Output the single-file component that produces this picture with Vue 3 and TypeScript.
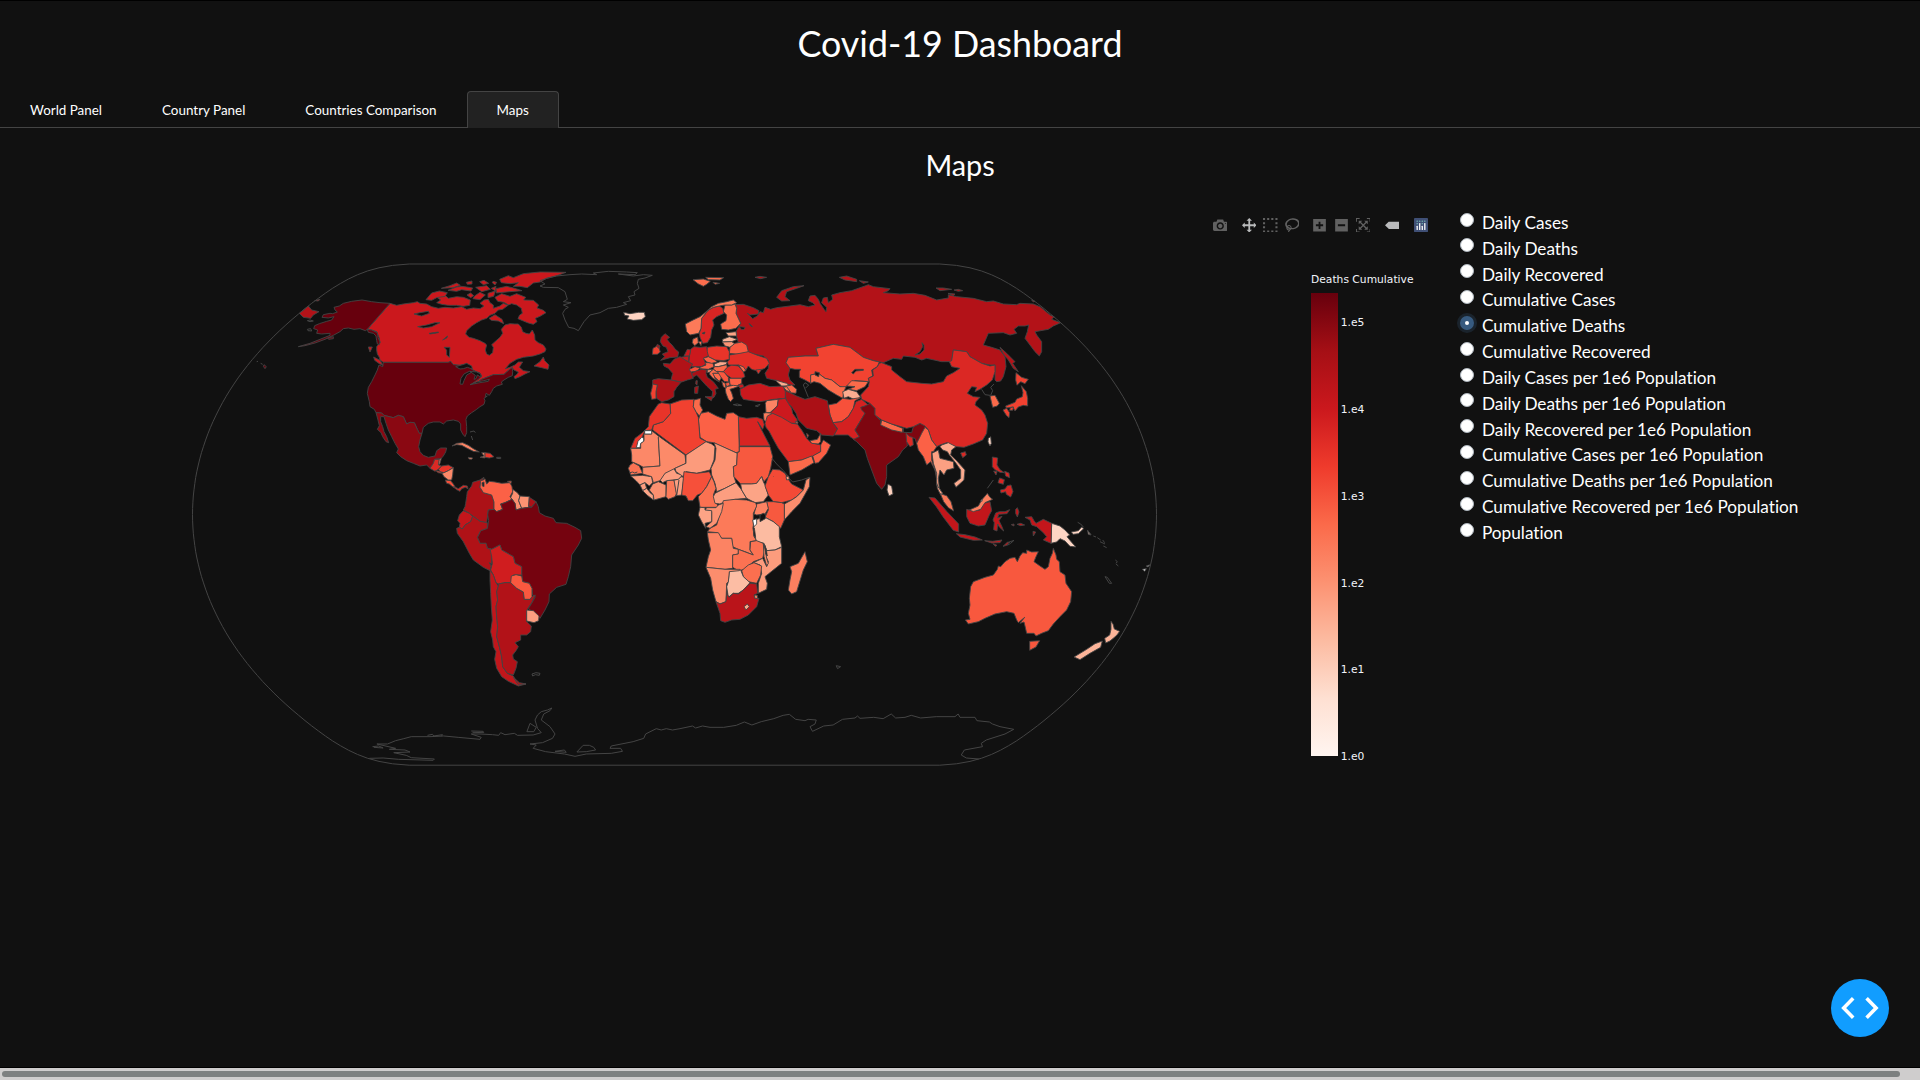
<script setup lang="ts">
import { ref } from 'vue'

type Shape = [fill: string, points: string]
interface Region { name: string; transform: string; shapes: Shape[]; lines?: string[] }

const tabs = ['World Panel', 'Country Panel', 'Countries Comparison', 'Maps']
const activeTab = ref('Maps')

const metrics = [
  'Daily Cases', 'Daily Deaths', 'Daily Recovered', 'Cumulative Cases', 'Cumulative Deaths',
  'Cumulative Recovered', 'Daily Cases per 1e6 Population', 'Daily Deaths per 1e6 Population',
  'Daily Recovered per 1e6 Population', 'Cumulative Cases per 1e6 Population',
  'Cumulative Deaths per 1e6 Population', 'Cumulative Recovered per 1e6 Population', 'Population'
]
const metric = ref('Cumulative Deaths')

const ticks = [
  { label: '1.e5', y: 321.9 }, { label: '1.e4', y: 409 }, { label: '1.e3', y: 496 },
  { label: '1.e2', y: 583 }, { label: '1.e1', y: 669 }, { label: '1.e0', y: 756 }
]

// Natural Earth projection, used for the outline of the globe
const K = 176.2
function project(lambda: number, phi: number): string {
  const p2 = phi * phi
  const p4 = p2 * p2
  const x = lambda * (0.8707 - 0.131979 * p2 + p4 * (-0.013791 + p4 * (0.003971 * p2 - 0.001529 * p4)))
  const y = phi * (1.007226 + p2 * (0.015085 + p4 * (-0.044475 + 0.028874 * p2 - 0.005916 * p4)))
  return `${(674.5 + K * x).toFixed(1)},${(514.6 - K * y).toFixed(1)}`
}
const globe = (() => {
  const pts: string[] = []
  for (let a = -90; a <= 90; a += 2) pts.push(project(Math.PI, (a * Math.PI) / 180))
  for (let a = 90; a >= -90; a -= 2) pts.push(project(-Math.PI, (a * Math.PI) / 180))
  return pts.join(' ')
})()

const BG = '#111111'
const CA = '#cb181d'
const US = '#67000d'
const RU = '#b31218'
const ID = '#c3161b'

const regions: Region[] = [
  {
    name: 'north-america',
    transform: 'translate(280 250) scale(.333333)',
    shapes: [
      [CA, '330,160 350,166 370,162 400,158 412,155 420,160 440,162 455,170 475,175 495,172 520,174 545,170 560,178 580,174 600,176 612,168 600,160 612,150 625,148 630,158 640,165 640,175 660,168 670,160 684,166 668,178 655,180 645,190 630,196 620,205 605,210 590,218 575,228 560,242 557,252 567,262 580,265 600,272 615,280 620,285 616,300 620,312 628,316 638,308 640,292 635,284 645,275 660,262 668,250 664,238 675,225 690,221 705,222 715,222 724,232 728,245 738,250 748,252 757,240 764,255 765,270 775,278 790,285 798,297 795,305 780,312 760,318 730,322 710,328 690,340 676,356 690,352 705,345 715,336 728,336 722,345 718,352 730,362 750,365 735,372 720,380 705,386 702,380 712,372 715,366 702,360 697,353 690,357 680,366 672,373 640,374 620,382 605,388 590,398 575,402 580,395 595,388 605,378 598,368 590,366 575,358 572,348 560,342 540,346 520,344 512,334 505,337 310,337 300,330 298,322 292,312 290,300 290,290 300,278 298,265 290,245 275,240 262,238'],
      [US, '330,160 300,158 275,155 246,150 215,154 190,160 178,168 162,172 165,180 172,186 158,191 150,190 130,194 126,202 145,204 162,200 155,210 140,214 118,221 104,227 101,236 113,240 110,250 125,252 150,250 150,256 120,268 90,280 55,290 75,287 105,279 135,268 160,256 180,245 190,236 205,234 222,238 240,236 256,242 262,238 265,247 280,250 288,258 290,272 292,282 298,284 300,276 294,262 292,248 275,240 262,238'],
      [US, '143,264 160,260 160,266 146,268'],
      [US, '310,337 505,337 512,334 520,344 540,346 560,342 572,348 575,358 590,366 598,368 605,378 595,388 575,402 590,398 605,388 620,382 640,374 672,373 680,366 690,357 697,353 698,365 697,377 685,382 672,390 664,396 667,403 650,408 640,415 635,425 628,436 618,430 616,440 622,438 612,445 615,452 612,463 600,470 590,478 575,488 562,498 558,508 560,530 560,548 555,560 548,552 542,540 542,522 535,514 520,510 500,513 490,522 480,516 460,516 445,520 430,532 426,550 418,550 412,538 403,518 390,517 380,522 370,500 355,496 340,503 312,496 305,489 288,488 283,478 270,470 268,455 262,430 265,412 275,395 285,375 292,360 297,345 308,350'],
      [BG, '527,350 545,345 560,340 575,348 577,357 562,352 550,356 540,357'],
      [BG, '540,402 543,385 552,372 570,363 573,368 560,375 552,392 548,403'],
      [BG, '570,364 590,366 602,372 603,382 592,375 588,386 582,388 586,376'],
      [BG, '570,404 590,396 612,392 628,388 625,394 600,398'],
      ['#8a0812', '288,488 305,489 312,496 340,503 355,496 370,500 380,522 390,517 403,518 412,538 418,550 426,550 420,570 416,590 420,605 430,616 445,622 465,618 470,602 482,594 500,594 497,606 490,618 484,625 478,626 464,628 460,640 450,655 440,645 420,648 400,640 380,632 362,620 350,608 355,597 345,580 335,560 325,540 318,520 312,500 302,500 302,515 308,530 312,545 320,560 326,578 318,575 308,560 303,548 292,538 298,527 294,510 290,495'],
      ['#dc2a25', '450,655 460,640 464,628 478,628 476,645 485,648 475,658 465,664'],
      ['#fc9272', '478,628 484,625 480,640 476,645'],
      ['#f14130', '468,662 480,664 486,670 474,668'],
      ['#e83429', '476,658 485,648 505,645 520,653 505,662 492,668 480,665'],
      ['#fc8868', '520,653 518,675 515,690 505,690 492,680 486,670 492,668 505,662'],
      ['#f7503a', '496,690 512,692 520,702 526,712 520,712 508,702 500,700'],
      ['#de2a25', '526,712 535,716 550,706 562,708 564,716 556,712 545,716 540,724 528,718 520,710'],
      ['#fc8464', '516,588 530,580 548,578 565,586 580,596 598,606 580,604 560,594 545,586 530,584'],
      ['#fc8d6d', '605,608 615,608 615,624 600,622 612,618'],
      ['#ea362a', '615,608 630,610 642,620 628,624 615,622'],
      ['#fc8d6d', '565,622 578,624 575,628 567,627'],
      [CA, '468,140 490,131 505,145 530,140 550,142 571,150 569,166 550,169 530,166 505,166 485,163 470,158 482,150'],
      [CA, '438,149 455,129 478,123 502,128 495,139 470,143 455,151'],
      [CA, '484,115 510,107 530,99 541,106 520,113'],
      [CA, '559,97 576,93 576,102 562,103'],
      [CA, '504,121 530,111 545,109 560,111 578,114 573,123 545,119 530,124'],
      [CA, '599,95 612,91 626,100 610,104'],
      [CA, '639,94 650,97 645,105 637,98'],
      [CA, '659,88 685,77 700,83 730,71 780,66 858,67 830,77 800,85 780,96 760,99 742,113 720,109 700,109 715,98 690,101 664,98'],
      [CA, '648,116 680,109 700,114 726,122 690,125 649,129'],
      [CA, '587,112 620,107 631,118 605,125'],
      [CA, '561,135 572,129 581,137 572,143'],
      [CA, '584,138 600,127 616,135 600,149 579,146'],
      [CA, '624,130 646,123 641,139 624,143'],
      [CA, '634,115 648,109 646,123'],
      [CA, '645,142 665,131 690,139 710,131 737,142 731,150 760,151 776,165 771,174 790,181 798,188 780,199 766,205 771,215 760,223 745,219 730,213 714,206 719,195 727,190 724,175 710,165 695,161 685,165 672,157 653,154'],
      [CA, '627,205 645,194 666,208 671,221 655,213 634,211'],
      [CA, '762,348 780,335 790,321 794,332 807,345 804,358 785,353'],
      [CA, '281,321 300,331 309,346 298,341 284,331'],
      [CA, '265,291 277,291 270,306'],
      [BG, '402,192 420,188 445,184 448,190 425,198'],
      [BG, '413,230 440,225 465,218 480,218 455,230 430,234'],
      [BG, '447,250 475,246 475,248 450,252'],
      [BG, '488,270 503,258 500,264'],
      [BG, '492,292 510,292 508,322 500,315 500,300'],
      [RU, '58,190 85,168 95,180 117,185 100,195 92,205 70,202'],
      [RU, '104,152 120,148 115,153'],
      ['#67000d', '-48,344 -41,350 -45,356 -50,349'],
      ['#fdd3c1', '1031,187 1050,191 1075,187 1093,187 1096,200 1085,209 1060,211 1041,207 1047,198 1034,196']
    ],
    lines: [
      '780,92 800,85 830,78 870,74 905,72 950,74 940,69 985,64 1040,66 1072,68 1065,74 1015,72 1060,78 1090,74 1117,76 1095,84 1075,88 1072,100 1077,115 1062,125 1065,135 1045,140 1052,152 1030,158 1040,163 1010,172 985,175 960,188 930,195 912,215 895,242 882,235 866,232 855,210 848,190 855,178 865,172 850,165 873,158 850,155 862,148 855,125 835,113 790,112 780,108 795,102 780,92',
      '82,212 90,210 100,213 90,215 82,212', '82,238 92,236 95,243 84,242 82,238',
      '650,622 662,622 662,626 650,625 650,622', '570,546 582,543 586,548', '574,558 578,570',
      '-70,335 -66,334', '-58,340 -52,343'
    ]
  },
  {
    name: 'south-america',
    transform: 'translate(430 460) scale(.333333)',
    shapes: [
      ['#ac1117', '162,52 150,60 128,67 125,78 112,95 110,110 107,130 105,140 100,150 118,160 128,168 150,184 170,188 173,165 175,150 192,148 192,126 185,105 160,98 150,82 155,64'],
      ['#fb6146', '152,62 160,60 165,56 170,72 178,64 195,66 215,70 240,68 246,80 248,95 240,110 246,118 225,128 212,132 218,148 200,155 192,148 192,126 185,105 160,98 150,82'],
      [BG, '156,68 162,66 162,80 157,78'],
      ['#fb6146', '232,64 244,63 243,71'],
      ['#fc8f6f', '248,88 262,98 270,108 266,122 275,145 258,150 255,130 242,112 248,100'],
      ['#fc9272', '270,108 298,110 296,142 275,145 266,122'],
      ['#ac1117', '298,112 318,125 305,142 296,138'],
      ['#75030f', '318,125 325,140 328,158 345,168 370,175 378,188 410,190 435,202 452,212 455,235 445,255 425,285 422,320 415,350 408,373 380,382 358,402 357,425 345,450 330,475 315,460 295,446 305,430 316,410 308,405 306,385 298,370 278,365 275,340 275,320 255,310 250,290 215,270 210,255 185,268 172,265 168,250 150,250 142,232 152,212 172,205 176,182 173,165 175,150 192,148 200,155 218,148 212,132 225,128 246,118 255,130 258,150 275,145 296,142 305,142'],
      ['#c4161b', '100,152 118,160 128,170 122,185 105,195 97,207 88,202 90,190 83,182 88,165'],
      ['#b01217', '128,168 150,184 172,188 172,205 152,212 142,232 150,250 168,250 172,265 185,268 185,290 185,312 180,332 160,322 130,300 118,280 100,245 82,220 80,205 88,202 97,207 105,195 122,185'],
      ['#d01d1f', '180,266 185,268 210,255 215,270 250,290 255,310 275,320 275,345 250,345 242,368 225,368 205,372 198,368 190,345 182,330 187,310 185,290'],
      [BG, '178,308 186,312 184,318'],
      ['#c1161b', '180,330 190,345 198,368 205,378 200,395 203,420 198,440 200,470 203,500 200,530 208,560 215,590 218,620 232,640 250,648 262,670 288,672 265,678 235,664 215,650 200,625 194,598 198,575 190,560 188,540 182,515 187,480 184,440 182,400 180,360'],
      ['#b21218', '205,378 205,372 225,368 242,368 260,385 280,396 283,418 300,418 305,410 316,405 305,428 293,446 290,460 290,485 304,498 302,515 290,525 272,525 272,540 255,548 265,560 258,572 248,585 250,597 262,605 258,625 250,645 232,640 218,620 215,590 208,560 200,530 203,500 200,470 198,440 203,420 200,395'],
      ['#b21218', '250,652 268,668 288,672 265,674'],
      ['#f9583f', '242,368 244,348 258,344 275,348 278,365 298,370 306,385 306,410 300,418 283,418 280,396 260,385'],
      ['#fc9e80', '290,450 310,452 327,468 326,482 312,488 290,483']
    ],
    lines: ['306,642 318,638 330,640 328,646 316,644 308,648 306,642']
  },
  {
    name: 'asia',
    transform: 'translate(740 270) scale(.333333)',
    shapes: [
      [RU, '-18,104 10,103 40,113 57,122 55,132 30,135 22,130 38,146 52,138 60,125 70,128 75,112 92,118 110,113 150,108 180,104 205,110 225,105 218,98 205,92 210,78 225,76 235,88 240,100 252,118 258,125 260,112 245,98 250,84 262,82 265,98 278,88 275,75 300,68 335,62 375,48 385,44 400,50 450,56 445,62 430,68 480,72 520,70 555,76 570,82 590,90 625,84 625,74 650,80 700,85 740,95 760,93 790,102 830,104 840,100 880,102 900,110 930,135 942,140 935,148 962,158 940,168 925,178 885,185 890,195 905,215 905,245 898,258 885,245 870,225 855,205 862,185 866,165 855,168 835,168 822,178 830,190 810,195 790,188 745,190 730,225 755,232 780,240 795,260 798,290 790,320 782,333 770,335 765,330 765,285 750,285 725,280 690,260 680,245 640,240 635,275 605,275 560,265 545,270 525,262 490,258 485,268 460,265 430,278 400,272 370,262 330,232 280,223 228,235 235,258 195,258 145,262 138,278 150,295 145,315 150,330 165,345 150,345 110,332 80,325 75,310 85,295 85,272 70,258 30,250 15,240 20,230 -5,218 -10,200 -12,185 2,160 -12,130 -10,115 -15,100'],
      [BG, '525,255 540,245 548,230 546,218 552,225 552,240 540,252'],
      [BG, '-2,170 15,172 12,178 4,178'],
      [BG, '27,160 38,170 32,168'],
      [RU, '110,82 125,62 160,50 192,47 170,55 140,65 135,80 150,92 125,93'],
      [RU, '298,22 320,18 350,28 350,35 315,30'],
      [RU, '358,32 385,36 370,40'],
      [RU, '588,54 610,54 635,58 600,62'],
      [RU, '642,60 655,58 668,62 655,64'],
      [RU, '624,70 645,72 640,77'],
      [RU, '45,22 60,19 80,22 62,26'],
      [RU, '875,90 885,94 880,96'],
      [RU, '780,232 800,250 825,275 818,280 835,305 820,295 805,270 790,252'],
      ['#f24331', '228,235 280,223 330,232 370,262 400,272 418,276 412,290 395,300 398,318 385,325 388,335 345,332 335,340 320,348 315,355 300,350 275,330 255,325 235,310 212,315 212,340 195,330 178,322 178,305 182,298 165,298 150,295 138,278 145,262 195,258 235,258'],
      ['#fb6a4a', '212,315 235,310 255,325 275,330 300,350 318,350 312,365 308,385 290,375 265,360 240,340 222,335 212,340'],
      [BG, '225,305 238,308 236,320 225,315'],
      [BG, '335,308 345,298 370,298 370,301 348,303 340,312'],
      ['#fb6a4a', '320,348 335,332 385,335 375,350 350,362 325,358 345,350'],
      ['#fcab8f', '308,365 325,358 350,365 362,382 345,390 325,380 312,385'],
      ['#f7503a', '265,405 290,400 308,385 330,388 365,382 345,392 340,415 325,440 305,455 278,458 270,435'],
      ['#d42121', '278,458 305,455 325,440 340,415 348,395 365,388 385,405 365,412 375,430 345,480 358,500 345,510 330,500 325,495 282,495 292,475'],
      ['#ab1016', '132,360 150,368 170,378 195,388 225,380 262,392 270,435 280,460 292,478 280,498 245,495 230,482 200,475 175,450 168,430 155,410 140,395 135,375'],
      ['#7e0610', '362,412 375,408 390,400 405,415 405,435 422,452 422,465 485,487 490,475 490,487 515,488 520,470 540,460 558,465 555,475 545,490 540,510 530,520 525,505 500,500 502,528 488,540 475,560 440,585 440,620 435,645 425,658 410,640 395,600 382,565 375,540 350,515 340,508 358,500 345,480 375,430 365,420'],
      ['#fb6a4a', '425,450 455,462 488,475 487,487 455,480 422,465'],
      ['#dc2a25', '498,490 510,500 518,502 520,525 510,530 500,515'],
      ['#fdd0bd', '444,642 455,649 459,672 447,678 441,660'],
      ['#db2824', '400,318 398,300 412,290 418,280 425,278 455,290 455,300 480,320 500,335 545,340 575,342 610,335 620,318 640,308 660,295 635,290 628,275 635,272 640,240 680,245 690,260 725,280 750,288 765,285 765,305 757,330 740,345 720,358 705,365 710,352 695,350 682,370 700,380 720,382 708,395 705,405 725,420 735,435 743,460 740,490 728,510 700,522 672,532 650,530 640,528 620,518 600,525 590,530 575,510 565,480 555,468 540,460 520,470 500,475 455,462 425,450 405,435 405,415 390,400 365,388 362,375 385,350 388,335 385,325'],
      ['#db2824', '662,549 676,545 679,555 668,563'],
      ['#fb6146', '555,472 565,480 575,510 590,530 580,545 575,545 575,570 585,600 592,640 590,610 572,575 560,585 550,560 535,540 530,520 545,490'],
      ['#fca082', '576,550 595,540 600,565 640,575 642,595 620,600 612,615 600,600 595,625 598,655 610,675 590,645 590,610 580,580'],
      ['#fcab8f', '605,525 625,518 648,530 635,540 632,555 650,572 675,600 672,630 648,652 642,640 662,625 662,600 648,580 628,555 622,545 608,540 600,530'],
      ['#fb6a4a', '750,378 765,376 778,400 772,408 758,412'],
      ['#f14130', '828,308 845,322 865,328 855,341 842,335 831,346 827,330'],
      ['#f14130', '844,347 859,365 863,385 863,408 850,406 835,411 825,423 819,411 799,414 797,408 825,397 830,387 847,380 849,368'],
      ['#f14130', '789,420 800,415 809,428 807,443 799,436'],
      ['#f14130', '811,413 821,411 818,421 809,421'],
      ['#fdd5c4', '745,505 752,500 754,520 750,528 744,516'],
      ['#d92523', '757,561 773,564 771,585 780,599 793,608 780,607 765,599 757,590'],
      ['#d92523', '794,604 807,609 809,623 797,618'],
      ['#d92523', '761,603 771,605 768,615'],
      ['#d92523', '779,624 793,629 790,643 774,638'],
      ['#d92523', '781,660 795,657 802,647 813,645 819,665 812,681 799,673 797,665 783,669']
    ],
    lines: ['742,655 760,630', '205,382 190,345 195,338 206,345 196,355', '725,358 735,374 750,376', '752,376 758,362 752,352 762,342']
  },
  {
    name: 'europe',
    transform: 'translate(600 250) scale(.333333)',
    shapes: [
      ['#ac1117', '184,262 195,251 209,262 201,268 209,278 216,285 226,298 236,306 233,321 210,323 182,331 194,320 187,312 204,305 199,292 189,288 181,275'],
      ['#ac1117', '172,283 180,288 178,296 168,292'],
      ['#f14130', '159,295 170,289 178,296 181,306 172,313 157,313'],
      ['#fb6d4d', '375,165 395,165 405,162 410,175 408,190 422,220 408,235 385,240 365,238 362,222 378,212 380,195 370,185'],
      ['#d92523', '303,235 305,205 325,180 340,172 358,168 368,175 372,190 350,200 338,210 342,225 335,240 332,262 322,278 308,280 300,262 298,250'],
      ['#fc7a59', '256,222 275,212 300,200 315,188 335,170 355,160 380,155 400,150 410,158 395,165 375,165 358,168 340,172 325,180 305,205 303,235 296,250 270,255 260,245'],
      [BG, '306,250 315,246 313,252'],
      ['#fb6d4d', '279,89 310,87 331,94 320,103 310,109 294,101'],
      ['#fb6d4d', '317,82 371,83 360,90 325,89'],
      ['#fb6d4d', '339,97 359,100 345,103'],
      ['#fb7050', '279,267 293,261 295,278 284,287 277,278'],
      ['#fb7050', '295,275 306,274 303,287'],
      ['#fca486', '378,248 408,245 410,258 385,258'],
      ['#fcb499', '368,268 388,260 412,268 395,275 367,276'],
      ['#fc9474', '367,276 395,275 405,282 390,292 375,288'],
      ['#f9583f', '390,292 405,280 425,276 440,285 445,305 430,315 388,310'],
      ['#e83429', '322,292 350,288 380,290 388,305 388,328 370,332 345,330 325,320 320,305'],
      [CA, '272,298 282,290 300,292 320,290 322,305 325,318 310,325 318,342 305,350 280,350 266,346 268,320'],
      [CA, '252,318 262,298 272,300 268,318'],
      ['#c5161b', '242,322 266,318 266,335 250,330'],
      ['#b11218', '190,340 210,342 222,328 240,320 262,334 278,342 270,355 275,370 280,385 262,390 245,396 213,390 218,370 205,355 192,348'],
      ['#ac1117', '158,390 175,386 213,390 243,397 230,412 222,425 222,440 205,450 185,455 170,445 168,425 172,405 158,402'],
      ['#f14130', '158,402 172,405 168,425 168,446 155,448 152,430 156,415'],
      ['#f7503a', '268,358 285,350 300,354 290,364 272,366'],
      ['#fa5f45', '300,352 318,345 315,338 338,338 342,350 325,358 300,356'],
      ['#a91016', '275,370 290,362 305,358 320,360 318,370 322,382 340,395 355,415 345,418 348,430 342,442 335,445 338,425 320,408 302,388 290,375 278,382'],
      ['#a91016', '315,440 338,440 334,452'],
      ['#a91016', '284,412 295,408 293,430 284,430'],
      ['#b11218', '288,392 292,392 291,405 287,402'],
      ['#fb6146', '310,325 325,320 345,330 352,336 335,340 320,336'],
      ['#fca98c', '343,342 360,335 382,336 378,344 355,350 343,350'],
      ['#fb6a4a', '343,350 355,350 380,344 382,352 370,365 350,365 340,358'],
      ['#dd2a25', '382,352 395,345 415,348 430,365 435,380 425,385 395,385 380,375 370,365'],
      ['#e32f27', '388,315 420,310 445,305 470,315 500,325 508,340 495,355 475,362 462,360 455,358 445,348 438,360 430,352 415,345 385,345 382,335 388,330'],
      ['#fb6a4a', '415,345 430,350 438,362 430,365'],
      ['#e32f27', '468,360 485,358 475,372'],
      ['#fc9474', '322,360 338,358 330,366 322,368'],
      ['#fb6a4a', '330,366 340,358 350,365 362,370 340,370 345,385 358,396 338,384 328,372'],
      ['#fb6a4a', '338,370 360,370 364,384 358,394 345,382'],
      ['#f9583f', '352,364 372,366 385,382 386,396 372,394 362,380'],
      ['#fb6a4a', '365,394 376,400 378,416 370,410'],
      ['#fb6146', '388,385 425,385 425,400 410,408 390,405'],
      ['#f9583f', '376,400 388,396 390,406 380,410'],
      ['#fc7a59', '376,418 380,410 400,406 418,408 400,415 390,418 395,428 400,445 392,455 385,448 378,430'],
      ['#c9181d', '415,405 428,402 432,412 420,415'],
      ['#c9181d', '420,418 445,405 480,400 510,410 550,408 556,425 556,445 520,448 500,452 480,455 455,452 430,448 422,435'],
      ['#fcab8f', '525,390 560,400 568,408 545,408'],
      ['#fb6a4a', '550,410 575,405 590,418 588,430 570,428 558,420'],
      ['#fc7a59', '550,412 560,410 572,426 560,422'],
      ['#fc8363', '496,460 500,452 535,448 532,468 510,488 498,488'],
      ['#fc7a59', '490,490 498,488 520,490 510,500 512,512 500,520 492,510'],
      ['#cc191e', '535,448 556,445 565,460 575,475 578,490 592,510 588,520 570,520 545,505 512,488 532,468']
    ],
    lines: ['400,464 412,467 425,466 412,462 400,464', '466,468 480,463 474,470 466,468']
  },
  {
    name: 'africa',
    transform: 'translate(610 380) scale(.333333)',
    shapes: [
      ['#db2824', '465,130 472,108 488,100 515,112 545,130 562,132 575,150 590,175 603,188 632,195 632,215 610,228 575,240 535,245 520,225 505,205 490,178 478,155 468,142'],
      ['#fc8363', '556,124 564,126 562,134'],
      ['#fb6a4a', '600,182 622,178 632,160 632,185 625,192 605,190'],
      ['#f7583e', '590,160 596,166 592,174'],
      ['#fb5d43', '632,195 640,180 662,195 650,220 625,248 615,250 608,228 632,215'],
      ['#fb6a4a', '535,245 575,240 605,228 612,248 575,270 540,285'],
      ['#d82422', '385,110 410,115 440,112 458,118 463,134 458,148 443,125 455,150 480,198 388,198'],
      ['#fb6146', '272,100 295,95 320,108 345,118 350,100 370,98 385,108 388,215 378,218 310,188 290,185 270,172 268,150 265,120'],
      ['#f14130', '180,72 215,60 252,58 250,80 258,95 265,112 268,150 270,175 290,185 228,225 128,150 130,135 160,125 182,100'],
      ['#fb6a4a', '252,60 272,55 270,75 278,90 268,108 258,95 250,80'],
      ['#e83429', '145,72 155,68 180,72 182,100 160,125 130,135 125,150 105,152 95,175 85,192 78,205 62,205 75,175 95,160 115,140 118,110'],
      ['#fc8868', '62,205 78,205 92,205 92,190 102,182 102,162 125,162 125,152 148,170 145,172 150,258 100,262 88,255 65,245 65,225'],
      ['#ffffff', '104,152 125,152 125,162 104,162'],
      ['#ffffff', '84,184 95,172 101,174 101,184 92,190 90,203 79,203'],
      ['#fc7353', '60,255 70,248 88,258 98,280 62,285 55,265'],
      ['#fc9c7d', '62,288 98,286 125,290 128,308 118,318 105,308 90,315 78,302'],
      ['#fc9e80', '90,315 105,308 110,325 98,332'],
      ['#fca486', '98,332 110,325 122,340 130,345 130,360 112,346'],
      ['#fc9070', '128,312 145,305 168,315 168,350 132,360 130,345 118,330'],
      ['#fc7a59', '170,302 192,300 200,340 195,350 175,358 168,350'],
      ['#fc9e80', '192,300 205,298 212,290 222,292 215,345 200,347'],
      ['#fc9e80', '150,300 165,278 190,263 200,280 218,285 205,298 170,302 158,308'],
      ['#fc8a69', '98,262 150,258 145,172 148,170 225,225 228,250 195,265 165,280 150,302 130,308 125,290 98,282'],
      ['#fc9b7c', '228,225 288,185 305,192 315,200 312,240 300,270 260,280 228,275 220,290 198,275 195,265 228,250'],
      ['#fc9272', '312,188 382,220 380,255 370,260 372,290 378,308 345,325 320,335 315,310 305,285 303,265 315,240 318,205'],
      ['#f7593f', '388,200 480,200 488,230 482,265 475,290 462,305 455,290 440,310 425,312 392,312 372,290 370,260 380,255 382,218 388,215'],
      ['#f6503a', '222,275 260,280 298,275 305,290 290,320 275,340 262,345 248,362 235,362 228,348 215,345 220,295'],
      ['#fb7151', '305,290 312,305 318,325 310,345 318,365 325,382 290,382 270,382 265,350 275,340 290,320'],
      ['#fc9e80', '315,340 345,325 378,308 395,330 410,355 375,358 345,365 330,372 315,370 310,350'],
      ['#fca486', '392,312 425,312 440,310 455,290 460,305 465,315 475,345 460,365 435,368 410,355 395,330'],
      ['#f34a36', '488,268 510,270 525,280 535,298 545,312 580,330 560,350 545,360 515,368 490,365 475,345 465,318 475,290'],
      ['#fc8d6d', '600,292 598,320 570,370 545,395 523,420 523,372 545,360 560,350 580,330 588,300'],
      ['#fc9e80', '528,290 536,288 538,298 530,300'],
      ['#f7593f', '470,365 490,365 515,368 523,372 523,420 512,445 490,425 465,412 475,390'],
      ['#fc8262', '440,372 470,365 475,385 465,402 440,405 432,402'],
      ['#fc7a59', '340,362 375,358 410,360 437,368 440,378 430,400 430,420 430,450 432,470 440,482 420,485 420,510 430,525 405,515 385,508 368,500 365,475 335,475 322,458 292,455 300,445 320,435 330,400'],
      ['#fcbba1', '440,418 465,412 490,425 508,440 508,470 515,500 495,510 470,512 462,490 440,485 432,460 430,445'],
      ['#ffffff', '428,420 440,416 440,432 432,440'],
      [BG, '450,405 460,400 467,404 466,416 450,425'],
      [BG, '429,440 433,444 437,472 432,468'],
      ['#fc9272', '325,375 340,370 335,395 320,430 300,445 288,440 305,425 305,395 285,390 290,383 318,383'],
      ['#fca486', '270,382 285,383 285,390 305,392 305,425 285,430 287,445 275,425 265,405'],
      ['#fc8363', '292,458 325,458 335,475 365,475 370,505 385,508 385,522 368,525 368,565 345,568 288,562 295,530 302,510 295,480'],
      ['#fb7252', '368,525 385,522 385,508 430,525 420,510 422,485 440,482 460,490 463,515 458,535 430,545 405,568 385,572 368,562'],
      ['#fc9c7d', '470,512 495,510 515,502 515,550 500,562 475,582 465,590 472,610 470,628 445,640 445,610 455,580 450,555 430,548 458,535 470,560 475,545 468,530'],
      ['#fc8a69', '460,490 466,510 470,535 475,550 470,558 462,530'],
      [BG, '464,495 468,505 472,528 467,522'],
      ['#fb6f4f', '395,572 415,555 432,548 455,558 452,585 440,610 415,605 400,590'],
      ['#fcbda4', '358,572 392,570 400,590 420,608 400,630 385,640 370,640 355,652 350,620 355,605'],
      ['#fc8d6d', '288,562 345,568 390,568 388,572 358,575 355,605 350,610 348,665 330,672 318,665 308,630 302,595'],
      ['#ba141a', '318,665 330,672 348,665 350,640 357,652 370,640 385,642 400,630 420,610 440,612 443,640 432,645 435,655 447,655 440,680 415,705 390,718 365,720 345,727 332,722 330,700'],
      ['#fca486', '402,680 412,672 418,680 408,690'],
      ['#fc8a69', '434,645 442,646 442,656 434,654'],
      ['#fc7f5f', '585,515 592,545 580,570 560,635 545,642 535,630 540,600 545,575 540,560 565,550']
    ],
    lines: ['60,278 68,276 74,279 82,276', '486,235 500,252 520,272 534,288', '538,296 548,306 575,300 598,292', '200,347 207,300', '492,291 491,290']
  },
  {
    name: 'oceania',
    transform: 'translate(910 420) scale(.333333)',
    shapes: [
      ['#f8583e', '166,600 180,598 175,580 180,555 178,535 182,500 190,485 225,472 250,465 262,448 265,438 272,440 285,425 300,415 315,412 322,425 330,408 338,398 350,400 350,390 365,396 385,395 378,410 372,425 390,438 405,448 415,440 420,415 427,400 430,385 438,405 440,418 448,425 450,455 465,465 468,490 485,515 482,545 470,570 450,590 430,612 415,632 395,640 378,648 372,640 350,640 345,618 342,606 330,610 344,592 325,608 320,600 312,580 290,575 255,582 225,595 205,605 175,612'],
      ['#f8583e', '359,664 389,662 378,681 359,691'],
      ['#fdd5c4', '425,310 450,318 465,330 479,345 471,350 486,368 498,381 480,379 465,363 450,356 440,366 423,370'],
      ['#fdd5c4', '484,336 505,332 515,321 521,326 505,341 489,343'],
      ['#fdd5c4', '533,332 543,345 535,343'],
      [ID, '425,310 423,370 400,360 410,350 400,338 380,320 365,315 360,300 345,292 365,290 372,302 378,310 400,298'],
      [ID, '170,268 185,272 210,270 222,250 240,245 245,272 238,285 225,315 205,318 180,310 170,290'],
      ['#fc7f5f', '178,270 205,258 215,240 228,225 232,220 240,232 248,238 225,248 212,268 190,275'],
      ['#ffffff', '212,242 217,238 216,244'],
      [ID, '57,232 75,234 111,275 146,312 146,336 130,331 99,290 79,260'],
      [ID, '139,341 165,344 195,351 217,360 190,361 150,351'],
      ['#fca082', '80,190 84,200 98,220 92,225 82,205'],
      ['#fb7858', '91,221 110,227 123,245 131,273 115,263 101,245'],
      [ID, '257,279 268,275 285,275 299,269 291,281 266,283 263,294 276,289 267,302 275,318 281,333 268,321 263,312 261,333 251,329 253,308 249,300'],
      [ID, '317,268 322,263 327,276 322,291 317,280'],
      [ID, '321,313 332,310 344,315 332,317'],
      [ID, '304,314 312,312 312,318'],
      [ID, '369,334 377,336 370,348'],
      [ID, '224,362 248,364 276,360 270,368 245,369'],
      [ID, '249,371 261,376 256,379'],
      [ID, '279,379 292,367 299,366 290,376'],
      ['#fcb499', '603,604 609,612 613,627 629,634 621,645 612,653 600,663 587,669 584,655 599,645 603,628'],
      ['#fcb499', '492,711 530,688 555,671 577,663 572,682 540,700 510,719'],
      ['#ffffff', '697,448 709,446 704,454'],
      ['#ffffff', '709,438 721,434 714,441']
    ],
    lines: ['296,367 312,361 302,370 292,376', '503,307 512,312 521,322', '532,330 543,344', '550,348 558,351', '562,353 572,360', '570,365 585,372', '580,378 590,383', '578,360 584,368', '585,470 592,472 605,490 598,490 585,470', '616,420 622,425 618,430', '618,432 625,438']
  },
  {
    name: 'antarctica',
    transform: 'translate(180 630) scale(.625 .333333)',
    shapes: [],
    lines: [
      '303,385 325,384 350,388 405,391 407,387 370,383 362,376 342,368 368,366 360,360 335,358 345,355 315,342 332,342 345,332 358,326 370,320 400,320 422,318 445,322 480,328 482,322 466,312 480,312 500,314 510,316 513,308 520,314 535,310 540,316 565,315 578,308 572,295 568,270 572,255 578,245 588,240 595,234 592,242 582,252 578,270 592,290 600,312 596,325 580,338 560,342 570,345 565,355 585,365 615,372 632,379 650,372 690,370 708,364 705,355 688,355 690,348 725,335 742,325 745,312 762,296 770,300 778,296 788,300 800,296 820,288 825,294 836,288 848,292 870,292 890,286 903,276 915,285 930,275 950,266 965,256 975,253 985,268 1000,272 1005,268 1018,270 1016,282 1008,290 1012,304 1030,288 1045,285 1060,268 1080,264 1084,258 1088,265 1110,262 1125,266 1138,252 1145,264 1160,262 1170,256 1185,264 1210,260 1240,260 1245,252 1248,262 1272,262 1275,272 1295,276 1300,282 1312,290 1334,298 1320,312 1290,330 1282,340 1284,350 1255,360 1250,375 1258,384 1278,387',
      '635,366 645,346 655,346 662,352 665,360 650,365 635,366', '555,305 560,280 570,292 566,305 555,305',
      '600,364 615,360 618,367 600,364', '466,303 485,304 486,308 468,307', '396,316 404,313 406,318 420,314 418,319', '308,350 318,348 325,354 310,352',
      '1050,107 1057,110 1052,116 1050,107'
    ]
  }
]

interface Icon { box: string; w: number; left: number; path: string; bright?: boolean }
const icons: Icon[] = [
  { box: '0 0 1000 1000', w: 14.5, left: 0, path: 'm500 450c-83 0-150-67-150-150 0-83 67-150 150-150 83 0 150 67 150 150 0 83-67 150-150 150z m400 150h-120c-16 0-34 13-39 29l-31 93c-6 15-23 28-40 28h-340c-16 0-34-13-39-28l-31-94c-6-15-23-28-40-28h-120c-55 0-100-45-100-100v-450c0-55 45-100 100-100h800c55 0 100 45 100 100v450c0 55-45 100-100 100z m-400-550c-138 0-250 112-250 250 0 138 112 250 250 250 138 0 250-112 250-250 0-138-112-250-250-250z m365 380c-19 0-35 16-35 35 0 19 16 35 35 35 19 0 35-16 35-35 0-19-16-35-35-35z' },
  { box: '0 0 1000 1000', w: 14.5, left: 14.5, bright: true, path: 'm1000 350l-187 188 0-125-250 0 0 250 125 0-188 187-187-187 125 0 0-250-250 0 0 125-188-188 186-187 0 125 252 0 0-250-125 0 187-188 188 188-125 0 0 250 250 0 0-126 187 188z' },
  { box: '0 0 1000 1000', w: 14.5, left: 7, path: 'm0 850l0-143 143 0 0 143-143 0z m286 0l0-143 143 0 0 143-143 0z m285 0l0-143 143 0 0 143-143 0z m286 0l0-143 143 0 0 143-143 0z m-857-286l0-143 143 0 0 143-143 0z m857 0l0-143 143 0 0 143-143 0z m-857-285l0-143 143 0 0 143-143 0z m857 0l0-143 143 0 0 143-143 0z m-857-286l0-143 143 0 0 143-143 0z m286 0l0-143 143 0 0 143-143 0z m285 0l0-143 143 0 0 143-143 0z m286 0l0-143 143 0 0 143-143 0z' },
  { box: '0 0 1031 1000', w: 14.8, left: 7, path: 'm1018 538c-36 207-290 336-568 286-277-48-473-256-436-463 10-57 36-108 76-151-13-66 11-137 68-183 34-28 75-41 114-42l-55-70 0 0c-2-1-3-2-4-3-10-14-8-34 5-45 14-11 34-8 45 4 1 1 2 3 2 5l0 0 113 140c16 11 31 24 45 40 4 3 6 7 8 11 48-3 100 0 151 9 278 48 473 255 436 462z m-624-379c-80 14-149 48-197 96 42 42 109 47 156 9 33-26 47-66 41-105z m-187-74c-19 16-33 37-39 60 50-32 109-55 174-68-42-25-95-24-135 8z m360 75c-34-7-69-9-102-8 8 62-16 128-68 170-73 59-175 54-244-5-9 20-16 40-20 61-28 159 121 317 333 354s407-60 434-217c28-159-121-318-333-355z' },
  { box: '0 0 875 1000', w: 13, left: 14, path: 'm1 787l0-875 875 0 0 875-875 0z m687-500l-187 0 0-187-125 0 0 187-188 0 0 125 188 0 0 187 125 0 0-187 187 0 0-125z' },
  { box: '0 0 875 1000', w: 13, left: 9, path: 'm0 788l0-876 875 0 0 876-875 0z m688-500l-500 0 0 125 500 0 0-125z' },
  { box: '0 0 1000 1000', w: 14.5, left: 7.5, path: 'm250 850l-187 0-63 0 0-62 0-188 63 0 0 188 187 0 0 62z m688 0l-188 0 0-62 188 0 0-188 62 0 0 188 0 62-62 0z m-875-938l0 188-63 0 0-188 0-62 63 0 187 0 0 62-187 0z m875 188l0-188-188 0 0-62 188 0 62 0 0 62 0 188-62 0z m-125 188l-1 0-93-94-156 156 156 156 92-93 2 0 0 250-250 0 0-2 93-92-156-156-156 156 94 92 0 2-250 0 0-250 0 0 93 93 157-156-157-156-93 94 0 0 0-250 250 0 0 0-94 93 156 157 156-157-93-93 0 0 250 0 0 250z' },
  { box: '0 0 1500 1000', w: 14.5, left: 14.5, bright: true, path: 'm375 725l0 0-375-375 375-374 0-1 1125 0 0 750-1125 0z' }
]
</script>

<template>
  <div class="page">
    <h1 class="title">Covid-19 Dashboard</h1>
    <nav class="tabs">
      <button
        v-for="tab in tabs"
        :key="tab"
        class="tab"
        :class="{ active: tab === activeTab }"
        @click="activeTab = tab"
      >{{ tab }}</button>
    </nav>
    <h2 class="subtitle">Maps</h2>

    <div class="content">
      <div class="plot">
        <svg class="map" width="1440" height="620" viewBox="0 200 1440 620">
          <defs>
            <linearGradient id="reds" x1="0" y1="0" x2="0" y2="1">
              <stop offset="0" stop-color="#67000d" />
              <stop offset=".125" stop-color="#a50f15" />
              <stop offset=".25" stop-color="#cb181d" />
              <stop offset=".375" stop-color="#ef3b2c" />
              <stop offset=".5" stop-color="#fb6a4a" />
              <stop offset=".625" stop-color="#fc9272" />
              <stop offset=".75" stop-color="#fcbba1" />
              <stop offset=".875" stop-color="#fee0d2" />
              <stop offset="1" stop-color="#fff5f0" />
            </linearGradient>
          </defs>
          <g v-for="r in regions" :key="r.name" :transform="r.transform">
            <polygon v-for="(s, i) in r.shapes" :key="i" class="land" :fill="s[0]" :points="s[1]" />
            <polyline v-for="(l, i) in r.lines" :key="'l' + i" class="coast" :points="l" />
          </g>
          <polygon class="coast" :points="globe" />
          <rect x="1311" y="293" width="27" height="463" fill="url(#reds)" />
          <text class="bar-text" x="1311" y="283" textLength="102.5">Deaths Cumulative</text>
          <text v-for="t in ticks" :key="t.label" class="bar-text" x="1340.7" :y="t.y + 4" textLength="23.6">{{ t.label }}</text>
        </svg>
        <div class="modebar">
          <svg
            v-for="(icon, i) in icons"
            :key="i"
            class="mode-icon"
            :class="{ bright: icon.bright }"
            :viewBox="icon.box"
            :style="{ width: icon.w + 'px', marginLeft: icon.left + 'px' }"
          ><path transform="matrix(1 0 0 -1 0 850)" :d="icon.path" /></svg>
          <svg class="logo" viewBox="0 0 132 132">
            <rect width="132" height="132" rx="4" fill="#3f4f75" />
            <g fill="#80cfbe"><circle cx="78" cy="54" r="6" /><circle cx="102" cy="30" r="6" /><circle cx="78" cy="30" r="6" /><circle cx="54" cy="30" r="6" /><circle cx="30" cy="30" r="6" /><circle cx="30" cy="54" r="6" /></g>
            <g fill="#fff"><rect x="24" y="72" width="12" height="42" rx="5" /><rect x="48" y="48" width="12" height="66" rx="5" /><rect x="72" y="72" width="12" height="42" rx="5" /><rect x="96" y="48" width="12" height="66" rx="5" /></g>
          </svg>
        </div>
      </div>

      <div class="options">
        <label v-for="m in metrics" :key="m" class="option">
          <span class="radio" :class="{ checked: m === metric }" />
          <input v-model="metric" class="native" type="radio" name="metric" :value="m">
          <span>{{ m }}</span>
        </label>
      </div>
    </div>

    <button class="debug" aria-label="Developer tools">
      <svg width="58" height="58" viewBox="0 0 58 58" fill="none" stroke="#fff" stroke-width="3.6">
        <path d="M22.2 19.3 12.7 29 22.2 38.7M35.6 19.3 45.1 29 35.6 38.7" />
      </svg>
    </button>
    <div class="scrollbar"><div class="thumb" /></div>
  </div>
</template>

<style>
html, body { margin: 0; background: #111111; overflow: hidden; }
</style>

<style scoped>
.page {
  box-sizing: border-box;
  display: flex;
  flex-direction: column;
  width: 1920px;
  height: 1080px;
  overflow: hidden;
  border-top: 1px solid #000;
  background: #111111;
  color: #fff;
  font-family: Lato, sans-serif;
  font-variant-ligatures: none;
}
.title {
  margin: 21px 0 0;
  height: 43px;
  font-size: 35.8px;
  font-weight: 400;
  line-height: 43px;
  text-align: center;
}
.tabs {
  display: flex;
  box-sizing: border-box;
  height: 37px;
  margin-top: 26px;
  border-bottom: 1px solid #444;
}
.tab {
  box-sizing: border-box;
  height: 37px;
  padding: 0 29px;
  border: 1px solid transparent;
  border-bottom: 0;
  border-radius: 4px 4px 0 0;
  background: none;
  color: #fff;
  font-family: inherit;
  font-size: 13.43px;
  line-height: 36px;
}
.tab.active {
  border-color: #444;
  background: #222;
}
.subtitle {
  margin: 19px 0 0;
  height: 36px;
  font-size: 28.8px;
  font-weight: 400;
  line-height: 36px;
  text-align: center;
}
.content {
  display: flex;
  margin-top: 17px;
}
.plot {
  position: relative;
  width: 1440px;
  height: 620px;
}
.map { display: block; }
.land {
  stroke: #444;
  stroke-width: 0.9px;
  stroke-linejoin: round;
  vector-effect: non-scaling-stroke;
}
.coast {
  fill: none;
  stroke: #444;
  stroke-width: 1px;
  stroke-linejoin: round;
  vector-effect: non-scaling-stroke;
}
.bar-text {
  fill: #f2f5fa;
  font-family: "DejaVu Sans", sans-serif;
  font-size: 10.7px;
}
.modebar {
  position: absolute;
  top: 17px;
  left: 1212.7px;
  display: flex;
  align-items: center;
  height: 16px;
}
.mode-icon {
  flex: none;
  height: 14.5px;
  fill: #616161;
}
.mode-icon.bright { fill: #b9babb; }
.logo {
  width: 14px;
  height: 14px;
  margin-left: 14.5px;
}
.options {
  display: flex;
  flex-direction: column;
  margin-left: 20px;
  padding-top: 10px;
}
.option {
  display: flex;
  height: 25.83px;
  font-size: 17.2px;
  line-height: 25.83px;
  white-space: nowrap;
}
.native {
  position: absolute;
  opacity: 0;
}
.radio {
  box-sizing: border-box;
  width: 14px;
  height: 14px;
  margin: 2.6px 8px 0 0;
  border: 1px solid #adb5bd;
  border-radius: 50%;
  background: #fff;
}
.radio.checked {
  border: 5px solid #375a7f;
  box-shadow: 0 0 0 3px rgba(55, 90, 127, 0.25);
}
.debug {
  position: absolute;
  top: 979px;
  left: 1831px;
  width: 58px;
  height: 58px;
  padding: 0;
  border: 0;
  border-radius: 50%;
  background: #119dff;
}
.debug svg { display: block; }
.scrollbar {
  box-sizing: border-box;
  height: 13px;
  margin-top: auto;
  padding: 3px 20px 3px 2px;
  border-top: 1px solid #000;
  background: #cfcdcd;
}
.thumb {
  height: 6px;
  border-radius: 3px;
  background: #7d8080;
}
</style>
